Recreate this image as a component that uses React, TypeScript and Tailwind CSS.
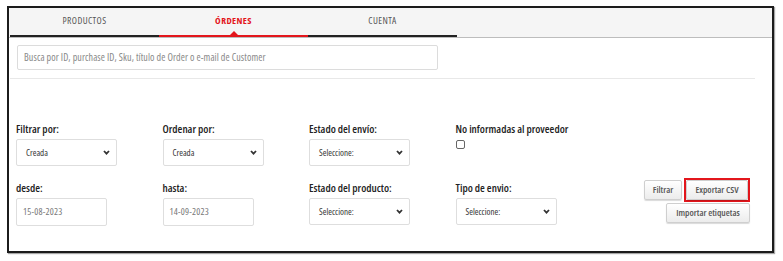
import React from "react";

const Chevron = () => (
  <svg width="7" height="5" viewBox="0 0 7 5" className="shrink-0">
    <path d="M1 1 L3.5 3.6 L6 1" fill="none" stroke="#333" strokeWidth="1.8" />
  </svg>
);

const Select = ({ text, w }: { text: string; w: string }) => (
  <div className={`${w} h-[27px] border border-[#dedede] rounded-[2px] bg-white flex items-center justify-between pl-[9px] pr-[6px]`}>
    <span className="text-[9px] text-[#333]">{text}</span>
    <Chevron />
  </div>
);

const Field = ({ label, children }: { label: string; children: React.ReactNode }) => (
  <div className="w-[146.5px] shrink-0 flex flex-col">
    <div className="text-[11px] font-semibold text-[#222] leading-[14px] h-[17px]">{label}</div>
    {children}
  </div>
);

const Btn = ({ children, cls = "" }: { children: React.ReactNode; cls?: string }) => (
  <div className={`h-[20px] border border-[#cfcfcf] rounded-[2px] bg-gradient-to-b from-white to-[#ececec] shadow-[0_1px_1px_rgba(0,0,0,0.15)] flex items-center justify-center text-[9.25px] font-semibold text-[#555] ${cls}`}>
    {children}
  </div>
);

export default function App() {
  return (
    <div className="w-[783px] h-[261px] bg-white font-stretch-semi-condensed" style={{ fontFamily: '"Open Sans", sans-serif' }}>
      <div className="absolute left-[7px] top-[6px] w-[767px] h-[247px] border-2 border-[#1c1c1c] shadow-[1px_1px_1px_rgba(0,0,0,0.35)] bg-white">
        {/* tabs */}
        <div className="h-[30px] bg-[#f5f5f5] border-b border-[#bdbdbd] flex items-end pl-[1px]">
          <div className="w-[149px] h-full flex flex-col">
            <div className="flex-1 flex items-center justify-center text-[9.5px] tracking-[0.4px] text-[#555]">PRODUCTOS</div>
            <div className="h-[2px] bg-[#222]" />
          </div>
          <div className="w-[149px] h-full flex flex-col relative">
            <div className="flex-1 flex items-center justify-center text-[9.5px] tracking-[0.4px] font-bold text-[#e3161c]">ÓRDENES</div>
            <div className="absolute left-1/2 -translate-x-1/2 bottom-[2px] w-0 h-0 border-l-[4px] border-r-[4px] border-b-[4px] border-l-transparent border-r-transparent border-b-[#e3161c]" />
            <div className="h-[2px] bg-[#e3161c]" />
          </div>
          <div className="w-[149px] h-full flex flex-col">
            <div className="flex-1 flex items-center justify-center text-[9.5px] tracking-[0.4px] text-[#555]">CUENTA</div>
            <div className="h-[2px] bg-[#222]" />
          </div>
        </div>
        {/* search */}
        <div className="pl-[8px] pt-[7px]">
          <div className="w-[421px] h-[25px] border border-[#dcdcdc] rounded-[2px] flex items-center pl-[6px] text-[10px] tracking-[0.1px] text-[#888]">
            Busca por ID, purchase ID, Sku, título de Order o e-mail de Customer
          </div>
        </div>
        <div className="ml-[1px] mt-[8px] w-[745px] h-px bg-[#e8e8e8]" />
        {/* filters */}
        <div className="pl-[7px] pt-[43px]">
          <div className="flex">
            <Field label="Filtrar por:"><Select text="Creada" w="w-[101px]" /></Field>
            <Field label="Ordenar por:"><Select text="Creada" w="w-[101px]" /></Field>
            <Field label="Estado del envío:"><Select text="Seleccione:" w="w-[101px]" /></Field>
            <Field label="No informadas al proveedor">
              <div className="w-[9px] h-[9px] mt-[1px] border border-[#666] rounded-[2px] bg-white" />
            </Field>
          </div>
          <div className="flex mt-[15px] relative">
            <Field label="desde:">
              <div className="w-[91px] h-[28px] border border-[#dedede] rounded-[2px] flex items-center pl-[6px] text-[9.5px] tracking-[0.2px] text-[#777]">15-08-2023</div>
            </Field>
            <Field label="hasta:">
              <div className="w-[91px] h-[28px] border border-[#dedede] rounded-[2px] flex items-center pl-[6px] text-[9.5px] tracking-[0.2px] text-[#777]">14-09-2023</div>
            </Field>
            <Field label="Estado del producto:"><Select text="Seleccione:" w="w-[101px]" /></Field>
            <Field label="Tipo de envio:"><Select text="Seleccione:" w="w-[101px]" /></Field>
            <div className="ml-auto mr-[22px] -mt-[3px] flex flex-col items-end">
              <div className="flex items-center">
                <Btn cls="w-[38px]">Filtrar</Btn>
                <div className="ml-[2px] border-2 border-[#e3161c] p-0">
                  <Btn cls="w-[62px]">Exportar CSV</Btn>
                </div>
              </div>
              <Btn cls="w-[84px] mt-[1px]">Importar etiquetas</Btn>
            </div>
          </div>
        </div>
      </div>
    </div>
  );
}
